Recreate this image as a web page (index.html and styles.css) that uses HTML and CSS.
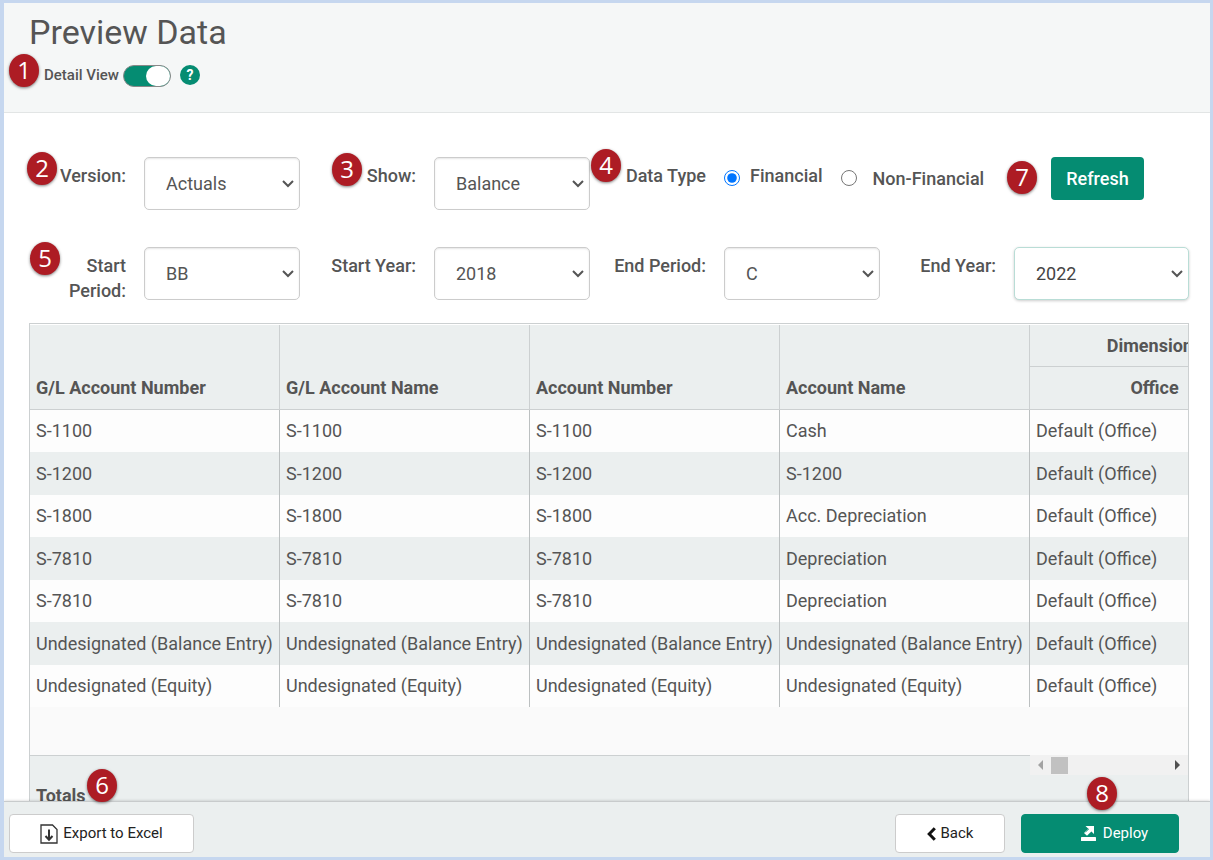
FILE: index.html
```html
<!DOCTYPE html>
<html lang="en">
<head>
    <meta charset="UTF-8">
    <meta name="viewport" content="width=device-width, initial-scale=1.0">
    <title>Preview Data</title>
    <link rel="stylesheet" href="styles.css">
</head>
<body>
    <header class="page-header">
        <h1>Preview Data</h1>
        <div class="detail-view">
            <span class="badge badge-1">1</span>
            <label for="detail-toggle">Detail View</label>
            <input type="checkbox" class="toggle" id="detail-toggle" checked>
            <button type="button" class="help" aria-label="Help">?</button>
        </div>
    </header>

    <main class="content">
        <form class="filters">
            <div class="field">
                <span class="badge badge-2">2</span>
                <label for="version">Version:</label>
                <select id="version"><option>Actuals</option></select>
            </div>
            <div class="field">
                <span class="badge badge-3">3</span>
                <label for="show">Show:</label>
                <select id="show"><option>Balance</option></select>
            </div>
            <div class="field field-wide" role="radiogroup" aria-labelledby="data-type">
                <span class="badge badge-4">4</span>
                <span class="field-label" id="data-type">Data Type</span>
                <div class="radios">
                    <input type="radio" name="type" id="financial" checked>
                    <label for="financial">Financial</label>
                    <input type="radio" name="type" id="non-financial">
                    <label class="lower" for="non-financial">Non-Financial</label>
                </div>
                <div class="refresh-box">
                    <span class="badge badge-7">7</span>
                    <button type="button" class="refresh">Refresh</button>
                </div>
            </div>
            <div class="field">
                <span class="badge badge-5">5</span>
                <label class="label-narrow" for="start-period">Start Period:</label>
                <select id="start-period"><option>BB</option></select>
            </div>
            <div class="field">
                <label for="start-year">Start Year:</label>
                <select id="start-year"><option>2018</option></select>
            </div>
            <div class="field">
                <label for="end-period">End Period:</label>
                <select id="end-period"><option>C</option></select>
            </div>
            <div class="field field-last">
                <label for="end-year">End Year:</label>
                <select id="end-year" class="active"><option>2022</option></select>
            </div>
        </form>

        <div class="grid">
            <table>
                <thead>
                    <tr>
                        <th rowspan="2">G/L Account Number</th>
                        <th rowspan="2">G/L Account Name</th>
                        <th rowspan="2">Account Number</th>
                        <th rowspan="2">Account Name</th>
                        <th class="group">Dimensions</th>
                    </tr>
                    <tr>
                        <th class="sub">Office</th>
                    </tr>
                </thead>
                <tbody>
                    <tr><td>S-1100</td><td>S-1100</td><td>S-1100</td><td>Cash</td><td>Default (Office)</td></tr>
                    <tr><td>S-1200</td><td>S-1200</td><td>S-1200</td><td>S-1200</td><td>Default (Office)</td></tr>
                    <tr><td>S-1800</td><td>S-1800</td><td>S-1800</td><td>Acc. Depreciation</td><td>Default (Office)</td></tr>
                    <tr><td>S-7810</td><td>S-7810</td><td>S-7810</td><td>Depreciation</td><td>Default (Office)</td></tr>
                    <tr><td>S-7810</td><td>S-7810</td><td>S-7810</td><td>Depreciation</td><td>Default (Office)</td></tr>
                    <tr><td>Undesignated (Balance Entry)</td><td>Undesignated (Balance Entry)</td><td>Undesignated (Balance Entry)</td><td>Undesignated (Balance Entry)</td><td>Default (Office)</td></tr>
                    <tr><td>Undesignated (Equity)</td><td>Undesignated (Equity)</td><td>Undesignated (Equity)</td><td>Undesignated (Equity)</td><td>Default (Office)</td></tr>
                </tbody>
            </table>
            <div class="totals">
                <div class="totals-label">Totals</div>
                <div class="scrollbar" aria-hidden="true">
                    <svg class="arrow-left" width="5" height="10" viewBox="0 0 5 10"><path d="M5 0v10L0 5z"/></svg>
                    <span class="thumb"></span>
                    <svg class="arrow-right" width="5" height="10" viewBox="0 0 5 10"><path d="M0 0v10l5-5z"/></svg>
                </div>
            </div>
        </div>
    </main>

    <footer class="page-footer">
        <div class="action export">
            <span class="badge badge-6">6</span>
            <button type="button" class="btn">
                <svg width="18" height="20" viewBox="0 0 18 20" fill="none" stroke="#333" stroke-width="1.3">
                    <path d="M1 1h11.5l4.5 4.5V19H1z"/>
                    <path d="M9 5.5v10M5.5 12L9 15.8l3.5-3.8" stroke-width="2"/>
                </svg>
                Export to Excel
            </button>
        </div>
        <div class="action back">
            <button type="button" class="btn">
                <svg width="9" height="14" viewBox="0 0 9 14" fill="none" stroke="#111" stroke-width="3"><path d="M7.8 1.2L2.2 7l5.6 5.8"/></svg>
                Back
            </button>
        </div>
        <div class="action deploy">
            <span class="badge badge-8">8</span>
            <button type="button" class="btn btn-primary">
                <svg width="15" height="15" viewBox="0 0 15 15" fill="#fff">
                    <rect y="11" width="15" height="4" rx="0.6"/>
                    <path d="M4.5 0H13v8l-2.6-2.6L6 9.8 3 7l4.3-4.2z"/>
                    <path d="M4.6 6l3.4-3.2" stroke="#058c72" stroke-width="0.8"/>
                </svg>
                Deploy
            </button>
        </div>
    </footer>
</body>
</html>
```
FILE: styles.css
```css
* {
    margin: 0;
    padding: 0;
    box-sizing: border-box;
}

body {
    display: flex;
    flex-direction: column;
    height: 100vh;
    border: 3px solid #c6d7ef;
    border-left-width: 4px;
    background: #fff;
    color: #555;
    font-family: Roboto, "Liberation Sans", sans-serif;
    font-size: 18px;
    line-height: 25px;
}

button, select {
    font: inherit;
    color: inherit;
}

/* header */
.page-header {
    height: 110px;
    padding: 9px 25px 0;
    background: #f5f7f7;
    border-bottom: 1px solid #e2e5e5;
}

h1 {
    font-size: 34px;
    font-weight: 400;
    line-height: 40px;
}

.detail-view {
    position: relative;
    display: flex;
    align-items: flex-start;
    margin-top: 13px;
    padding-left: 15px;
    font-size: 15px;
    line-height: 20px;
    font-weight: 500;
}

.toggle {
    appearance: none;
    width: 48px;
    height: 22px;
    margin: 0 9px 0 4px;
    border: 1px solid #888;
    border-radius: 11px;
    background: #058c72;
}

.toggle::before {
    content: "";
    display: block;
    width: 24px;
    height: 20px;
    margin-left: auto;
    border-radius: 10px;
    background: #fff;
}

.help {
    width: 20px;
    height: 20px;
    border: 0;
    border-radius: 50%;
    background: #058c72;
    color: #fff;
    font-size: 14px;
    font-weight: 700;
}

/* numbered callouts */
.badge {
    position: absolute;
    z-index: 2;
    width: 30px;
    height: 33px;
    border-radius: 50%;
    background: #ad1c24;
    box-shadow: 0 1px 3px rgba(0, 0, 0, 0.5);
    color: #fff;
    font-family: "Open Sans", sans-serif;
    font-size: 24px;
    font-weight: 400;
    line-height: 31px;
    text-align: center;
}

.badge-1 { left: -20px; top: -11px; }
.badge-2 { left: -2px; top: -5px; }
.badge-3 { left: 13px; top: -4px; }
.badge-4 { left: -18px; top: -8px; }
.badge-5 { left: 1px; top: -5px; }
.badge-6 { left: 78px; top: -45px; }
.badge-7 { left: -44px; top: 4px; }
.badge-8 { left: 66px; top: -37px; }

/* filters */
.content {
    flex: 1;
    min-height: 0;
    display: flex;
    flex-direction: column;
    overflow: hidden;
    padding: 44px 21px 0 25px;
}

.filters {
    display: grid;
    grid-template-columns: repeat(4, 1fr);
    row-gap: 37px;
    margin-bottom: 20px;
}

.field {
    position: relative;
    display: flex;
    align-items: flex-start;
    gap: 18px;
    padding-right: 19px;
    font-weight: 500;
}

.field-wide {
    grid-column: span 2;
    padding-right: 45px;
}

.field-last {
    padding-right: 0;
}

.field > label,
.field-label {
    flex: 0 0 97px;
    padding-top: 6px;
    text-align: right;
}

.field > .label-narrow {
    padding-left: 30px;
}

select {
    flex: 1;
    min-width: 0;
    height: 53px;
    padding: 0 30px 0 21px;
    appearance: none;
    border: 1px solid #ccc;
    border-radius: 5px;
    background: #fff url("data:image/svg+xml,%3Csvg xmlns='http://www.w3.org/2000/svg' width='12' height='8' fill='none' stroke='%23555' stroke-width='2'%3E%3Cpath d='M1 1l5 5 5-5'/%3E%3C/svg%3E") no-repeat right 5px center;
    box-shadow: inset 0 1px 2px rgba(0, 0, 0, 0.1);
    font-weight: 400;
}

select.active {
    border-color: #b9ddd6;
    box-shadow: 0 1px 3px rgba(0, 0, 0, 0.2);
    color: #444;
}

.radios {
    display: flex;
    align-items: flex-start;
}

.radios input {
    width: 16px;
    height: 16px;
    margin: 13px 10px 0 0;
}

.radios label {
    padding-top: 6px;
    margin-right: 18px;
}

.radios label.lower {
    padding: 9px 0 0 6px;
    margin-right: 0;
}

.refresh-box {
    position: relative;
    margin-left: auto;
}

.refresh {
    width: 93px;
    height: 43px;
    border: 0;
    border-radius: 4px;
    background: #058c72;
    color: #fff;
}

/* data grid */
.grid {
    flex: 1;
    display: flex;
    flex-direction: column;
    overflow: hidden;
    padding-top: 1px;
    border: 1px solid #ccd0d1;
    border-bottom: 0;
}

table {
    flex: none;
    width: 1250px;
    table-layout: fixed;
    border-collapse: separate;
    border-spacing: 0;
}

th {
    height: 43px;
    padding: 0 6px 9px;
    background: #ebefef;
    border-right: 1px solid #ccd0d1;
    border-bottom: 1px solid #ccd0d1;
    text-align: left;
    vertical-align: bottom;
    font-weight: 700;
}

th.group {
    height: 42px;
    padding-bottom: 8px;
}

th.group,
th.sub {
    text-align: center;
}

td {
    height: 42px;
    padding: 0 6px 1px;
    background: #fdfdfd;
    border-right: 1px solid #bcc0c1;
    white-space: nowrap;
}

tbody tr:nth-child(even) td {
    height: 43px;
    background: #ebefef;
}

.totals {
    flex: 1;
    display: flex;
    justify-content: space-between;
    align-items: flex-start;
    padding-left: 6px;
    border-top: 48px solid #fafafa;
    background: #ebefef;
    box-shadow: inset 0 1px #ccd0d1;
    font-weight: 700;
}

.totals-label {
    padding-top: 28px;
}

.scrollbar {
    display: flex;
    align-items: center;
    width: 158px;
    height: 20px;
    padding: 0 8px;
    background: #f1f1f1;
}

.arrow-left {
    fill: #a3a3a3;
}

.thumb {
    width: 17px;
    height: 17px;
    margin: 0 auto 0 8px;
    background: #c1c1c1;
}

.arrow-right {
    fill: #505050;
}

/* footer */
.page-footer {
    display: flex;
    gap: 16px;
    padding: 12px 31px 4px 5px;
    background: #ebefef;
    border-top: 1px solid #c8cbcc;
    box-shadow: 0 0 3px rgba(0, 0, 0, 0.2);
    z-index: 1;
}

.action {
    position: relative;
}

.export {
    width: 185px;
    margin-right: auto;
}

.back {
    width: 110px;
}

.deploy {
    width: 158px;
}

.btn {
    display: flex;
    align-items: center;
    justify-content: center;
    gap: 5px;
    width: 100%;
    height: 39px;
    border: 1px solid #ccc;
    border-radius: 4px;
    background: #fff;
    color: #222;
    font-size: 15px;
}

.btn-primary {
    padding-left: 29px;
    gap: 7px;
    border-color: #058c72;
    background: #058c72;
    color: #fff;
}
```
